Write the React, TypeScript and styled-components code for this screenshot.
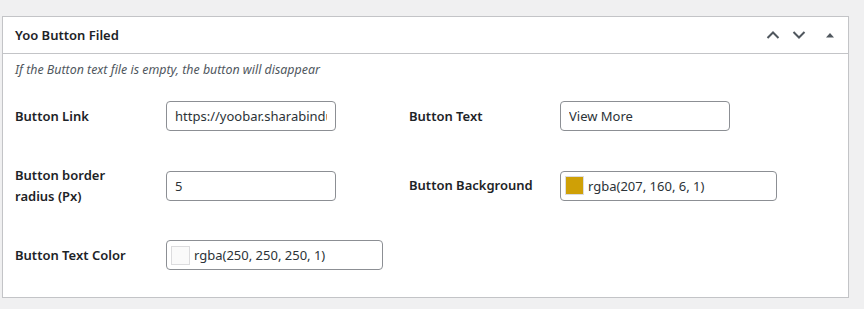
import React from "react";
import styled, { createGlobalStyle } from "styled-components";

const GlobalStyle = createGlobalStyle`
  html, body {
    margin: 0;
    padding: 0;
    background: #f0f0f1;
    font-family: "Noto Sans", "Open Sans", sans-serif;
    color: #1d2327;
  }
`;

function App() {
  const rows = [
    [
      { label: "Button Link", value: "https://yoobar.sharabindu.com" },
      { label: "Button Text", value: "View More" },
    ],
    [
      { label: "Button border radius (Px)", value: "5" },
      { label: "Button Background", value: "rgba(207, 160, 6, 1)", swatch: "rgb(207, 160, 6)" },
    ],
    [{ label: "Button Text Color", value: "rgba(250, 250, 250, 1)", swatch: "#fafafa" }],
  ];

  return (
    <>
      <GlobalStyle />
      <Wrap>
        <Panel>
          <Head>
            <h2>Yoo Button Filed</h2>
            <Actions>
              <IconBtn aria-label="Move up">
                <svg width="14" height="14" viewBox="0 0 14 14">
                  <path d="M1.5 10 L7 4.5 L12.5 10" fill="none" stroke="#50575e" strokeWidth="2" />
                </svg>
              </IconBtn>
              <IconBtn aria-label="Move down">
                <svg width="14" height="14" viewBox="0 0 14 14">
                  <path d="M1.5 4 L7 9.5 L12.5 4" fill="none" stroke="#50575e" strokeWidth="2" />
                </svg>
              </IconBtn>
              <IconBtn aria-label="Toggle panel" $wide>
                <svg width="10" height="10" viewBox="0 0 10 10">
                  <path d="M1 7.5 L5 3 L9 7.5 Z" fill="#50575e" />
                </svg>
              </IconBtn>
            </Actions>
          </Head>
          <Inside>
            <Note>If the Button text file is empty, the button will disappear</Note>
            <FormGrid>
              {rows.map((row) =>
                row.map((f) => (
                  <React.Fragment key={f.label}>
                    <Label>{f.label}</Label>
                    <Cell>
                      {f.swatch ? (
                        <ColorField>
                          <Swatch $color={f.swatch} />
                          {f.value}
                        </ColorField>
                      ) : (
                        <TextInput type="text" defaultValue={f.value} />
                      )}
                    </Cell>
                  </React.Fragment>
                ))
              )}
            </FormGrid>
          </Inside>
        </Panel>
      </Wrap>
    </>
  );
}

const Wrap = styled.div`
  padding: 16px 15px 0 2px;
`;

const Panel = styled.div`
  background: #fff;
  border: 1px solid #c3c4c7;
  box-shadow: 0 1px 1px rgba(0, 0, 0, 0.04);
`;

const Head = styled.div`
  height: 36px;
  display: flex;
  align-items: center;
  justify-content: space-between;
  border-bottom: 1px solid #c3c4c7;
  padding-left: 12px;
  & > h2 {
    margin: 0;
    font-size: 13px;
    font-weight: 600;
    color: #1d2327;
  }
`;

const Actions = styled.div`
  display: flex;
  align-items: center;
  height: 100%;
`;

const IconBtn = styled.button<{ $wide?: boolean }>`
  border: 0;
  background: none;
  padding: 0;
  width: ${(p) => (p.$wide ? "36px" : "26px")};
  height: 100%;
  display: flex;
  align-items: center;
  justify-content: center;
  cursor: pointer;
`;

const Inside = styled.div`
  padding: 0 12px 7px;
`;

const Note = styled.p`
  margin: 0;
  padding-top: 7px;
  font-size: 12.4px;
  line-height: 18px;
  font-style: italic;
  color: #50575e;
`;

const FormGrid = styled.div`
  display: grid;
  grid-template-columns: 151px 243px 151px 1fr;
  grid-template-rows: 70px 69px 70px;
  align-items: center;
  margin-top: 2px;
`;

const Label = styled.div`
  font-size: 13px;
  font-weight: 600;
  line-height: 21px;
  color: #1d2327;
  max-width: 132px;
`;

const Cell = styled.div`
  display: flex;
  align-items: center;
`;

const TextInput = styled.input`
  box-sizing: border-box;
  width: 170px;
  height: 30px;
  border: 1px solid #8c8f94;
  border-radius: 4px;
  padding: 0 8px;
  font-family: inherit;
  font-size: 13px;
  color: #2c3338;
  background: #fff;
  outline: none;
`;

const ColorField = styled.div`
  box-sizing: border-box;
  width: 217px;
  height: 30px;
  border: 1px solid #8c8f94;
  border-radius: 4px;
  padding: 0 4px;
  display: flex;
  align-items: center;
  gap: 4px;
  font-size: 13px;
  color: #2c3338;
  background: #fff;
`;

const Swatch = styled.span<{ $color: string }>`
  width: 17px;
  height: 17px;
  background: ${(p) => p.$color};
  border: 1px solid #dcdcde;
`;

export default App;
